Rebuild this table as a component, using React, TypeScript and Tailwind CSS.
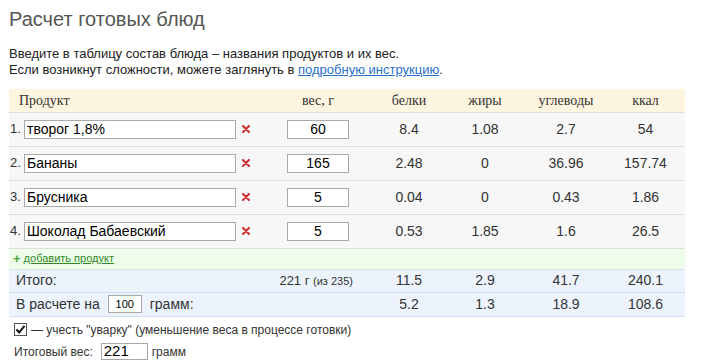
const rows = [
  { name: 'творог 1,8%', w: '60', b: '8.4', f: '1.08', c: '2.7', k: '54' },
  { name: 'Бананы', w: '165', b: '2.48', f: '0', c: '36.96', k: '157.74' },
  { name: 'Брусника', w: '5', b: '0.04', f: '0', c: '0.43', k: '1.86' },
  { name: 'Шоколад Бабаевский', w: '5', b: '0.53', f: '1.85', c: '1.6', k: '26.5' },
];

function DelIcon() {
  return (
    <svg width="8" height="8" viewBox="0 0 8 8" className="block">
      <path d="M1 1 L7 7 M7 1 L1 7" stroke="#d0353a" strokeWidth="2.2" strokeLinecap="round" />
    </svg>
  );
}

export default function App() {
  return (
    <div className="w-[702px] h-[360px] bg-white overflow-hidden font-['Liberation_Sans',Arial,sans-serif] text-[#222]">
      <div className="pl-[9px] pt-[5px]">
        <h1 className="text-[20px] leading-[28px] text-[#555]">Расчет готовых блюд</h1>
        <p className="mt-[13px] text-[13px] leading-[16px] text-[#222]">
          Введите в таблицу состав блюда – названия продуктов и их вес.
          <br />
          Если возникнут сложности, можете заглянуть в{' '}
          <a href="#" className="text-[#2a6fc9] underline">подробную инструкцию</a>.
        </p>
      </div>

      <table className="ml-[9px] mt-[11px] w-[676px] border-collapse table-fixed">
        <colgroup>
          <col className="w-[253px]" />
          <col className="w-[112px]" />
          <col className="w-[70px]" />
          <col className="w-[82px]" />
          <col className="w-[80px]" />
          <col className="w-[79px]" />
        </colgroup>
        <thead>
          <tr className="h-[23px] bg-[#fdf5df] border-b border-[#dedede] font-['Liberation_Serif','Times_New_Roman',serif] text-[14px] text-[#333]">
            <th className="text-left font-normal pl-[10px]">Продукт</th>
            <th className="font-normal">вес, г</th>
            <th className="font-normal">белки</th>
            <th className="font-normal">жиры</th>
            <th className="font-normal">углеводы</th>
            <th className="font-normal">ккал</th>
          </tr>
        </thead>
        <tbody className="text-[14px] text-[#333]">
          {rows.map((r, i) => (
            <tr key={i} className="h-[34px] bg-[#f7f7f7] border-b border-[#dedede]">
              <td>
                <div className="flex items-center">
                  <span className="ml-[1px] w-[12px] mr-[2px] text-[13px] text-[#333]">{i + 1}.</span>
                  <input
                    readOnly
                    value={r.name}
                    className="w-[212px] h-[19px] border border-[#a9a9a9] bg-white px-[2px] text-[14px] text-black outline-none"
                  />
                  <span className="ml-[6px]"><DelIcon /></span>
                </div>
              </td>
              <td>
                <div className="flex justify-center">
                  <input
                    readOnly
                    value={r.w}
                    className="w-[62px] h-[19px] border border-[#a9a9a9] bg-white text-center text-[14px] text-black outline-none"
                  />
                </div>
              </td>
              <td className="text-center">{r.b}</td>
              <td className="text-center">{r.f}</td>
              <td className="text-center">{r.c}</td>
              <td className="text-center">{r.k}</td>
            </tr>
          ))}
          <tr className="h-[21px] bg-[#eefde9] border-b border-[#d6e4f2]">
            <td colSpan={6} className="pl-[4px]">
              <div className="flex items-center gap-[3px] text-[11px]">
                <span className="text-[#4aa336] font-bold text-[13px] leading-[10px]">+</span>
                <a href="#" className="text-[#2f8a1f] underline">добавить продукт</a>
              </div>
            </td>
          </tr>
          <tr className="h-[23px] bg-[#ecf3fd] border-b border-[#d3def0]">
            <td className="pl-[7px] text-[14px]">Итого:</td>
            <td className="text-right pr-[21px] text-[13px] whitespace-nowrap">
              221 г <span className="text-[11px]">(из 235)</span>
            </td>
            <td className="text-center">11.5</td>
            <td className="text-center">2.9</td>
            <td className="text-center">41.7</td>
            <td className="text-center">240.1</td>
          </tr>
          <tr className="h-[24px] bg-[#ecf3fd] border-b border-[#d3def0]">
            <td className="pl-[7px] text-[14px]" colSpan={2}>
              <div className="flex items-center">
                <span>В расчете на</span>
                <input
                  readOnly
                  value="100"
                  className="ml-[8px] w-[34px] h-[18px] border border-[#a9a9a9] bg-white text-center text-[11px] text-black outline-none"
                />
                <span className="ml-[8px]">грамм:</span>
              </div>
            </td>
            <td className="text-center">5.2</td>
            <td className="text-center">1.3</td>
            <td className="text-center">18.9</td>
            <td className="text-center">108.6</td>
          </tr>
        </tbody>
      </table>

      <div className="pl-[14px] pt-[6px] text-[12px] text-[#333]">
        <div className="flex items-center h-[14px]">
          <span className="w-[13px] h-[13px] border border-[#555] bg-white flex items-center justify-center">
            <svg width="11" height="11" viewBox="0 0 11 11">
              <path d="M1.5 5.5 L4.2 8.5 L9.5 1.8" stroke="#111" strokeWidth="2" fill="none" />
            </svg>
          </span>
          <span className="ml-[4px]">— учесть "уварку" (уменьшение веса в процессе готовки)</span>
        </div>
        <div className="flex items-center mt-[6px]">
          <span>Итоговый вес:</span>
          <input
            readOnly
            value="221"
            className="ml-[8px] w-[47px] h-[17px] border border-[#a9a9a9] bg-white px-[2px] text-[15px] text-black outline-none"
          />
          <span className="ml-[4px]">грамм</span>
        </div>
      </div>
    </div>
  );
}
